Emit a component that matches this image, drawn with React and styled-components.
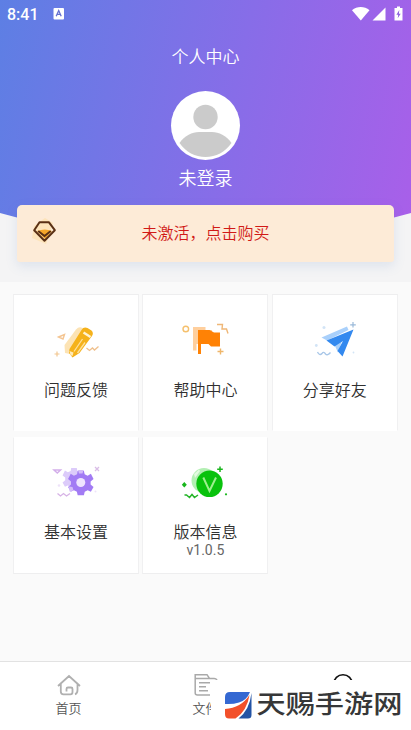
import React from "react";
import styled, { createGlobalStyle } from "styled-components";

const GlobalStyle = createGlobalStyle`
  * {
    box-sizing: border-box;
  }

  body {
    margin: 0;
    font-family: Roboto, "Noto Sans CJK SC", sans-serif;
    background-color: #fafafa;
  }

  svg {
    display: block;
  }
`

const Page = styled.div`
  position: relative;
  width: 411px;
  height: 730px;
  display: flex;
  flex-direction: column;
  overflow: hidden;
  background-color: #fafafa;
`

const Top = styled.div`
  height: 282px;
  flex: none;
  background-color: #f4f4f5;
`

const Header = styled.div`
  height: 240px;
  display: flex;
  flex-direction: column;
  align-items: center;
  color: #ffffff;
  background: linear-gradient(102deg, #5d7fe4 0%, #876de8 55%, #a95fe9 100%);
  clip-path: ellipse(445px 240px at 50% 0);
`

const StatusBar = styled.div`
  width: 100%;
  height: 28px;
  display: flex;
  align-items: center;
  padding: 0 7px;

  .time {
    font-size: 16px;
    font-weight: 500;
    line-height: 28px;
    padding-top: 1px;
    margin-right: 14px;
  }

  .icons {
    margin-left: auto;
    margin-right: -2px;
  }
`

const Title = styled.div`
  margin-top: 16px;
  font-size: 17px;
  font-weight: 350;
  line-height: 26px;
`

const Avatar = styled.div`
  width: 69px;
  height: 69px;
  margin-top: 21px;
  border-radius: 50%;
  overflow: hidden;
  background-color: #ffffff;
`

const UserName = styled.div`
  margin-top: 5px;
  font-size: 18px;
  font-weight: 350;
  line-height: 28px;
`

const Banner = styled.div`
  position: relative;
  height: 57px;
  margin: -35px 17px 0;
  display: grid;
  grid-template-columns: 56px 1fr 56px;
  align-items: center;
  border-radius: 5px 5px 3px 3px;
  background-color: #fdebd7;
  box-shadow: 0 4px 12px rgba(90, 130, 190, 0.15);

  .gem {
    margin: -5px 0 0 11px;
  }

  .text {
    color: #d11a16;
    font-size: 16px;
    font-weight: 350;
    line-height: 24px;
    text-align: center;
  }
`

const Grid = styled.div`
  display: grid;
  grid-template-columns: 126px 126px 126px;
  grid-auto-rows: 137px;
  column-gap: 3.4px;
  row-gap: 6px;
  padding: 12px 13px 0;
`

const Cell = styled.div`
  display: flex;
  flex-direction: column;
  align-items: center;
  padding-top: ${(props) => (props.$last ? "22px" : "24px")};
  background-color: #ffffff;
  border: 1px solid #f0f0f1;
  border-top-color: ${(props) => (props.$last ? "#ffffff" : "#eeeeef")};
  border-bottom-color: ${(props) => (props.$last ? "#eeeeef" : "#ffffff")};

  .label {
    margin-top: ${(props) => (props.$last ? "11px" : "10px")};
    font-size: 16px;
    font-weight: 350;
    line-height: 24px;
    color: #303030;
  }

  .note {
    margin-top: -4px;
    font-size: 14px;
    line-height: 18px;
    color: #666666;
  }
`

const TabBar = styled.div`
  height: 69px;
  margin-top: auto;
  display: grid;
  grid-template-columns: repeat(3, 1fr);
  background-color: #ffffff;
  border-top: 1px solid #e2e2e2;
`

const Tab = styled.div`
  display: flex;
  flex-direction: column;
  align-items: center;
  padding-top: 11px;
  color: #555555;
  font-size: 13px;
  font-weight: 350;
  line-height: 20px;

  svg {
    margin-bottom: 2px;
  }
`

const SiteMark = styled.div`
  position: absolute;
  right: 0;
  bottom: 0;
  width: 200px;
  height: 50px;
  display: flex;
  align-items: center;
  gap: 5px;
  padding: 0 0 0 13.5px;
  background-color: #ffffff;

  .name {
    font-family: "Noto Sans CJK SC", sans-serif;
    font-size: 29.2px;
    font-weight: 500;
    line-height: 40px;
    color: #363738;
    white-space: nowrap;
    transform: translateY(-3px) scaleY(0.87);
  }
`

const KeyboardIcon = () => (
  <svg width="12" height="12" viewBox="0 0 12 12">
    <rect x="0.5" y="0" width="10.5" height="11.5" rx="1" fill="#fff" />
    <path d="M3.2 8.2 5.7 2.5 8.2 8.2M4.1 6.3h3.2" fill="none" stroke="#646fd0" strokeWidth="1.3" />
  </svg>
)

const SignalIcons = () => (
  <svg className="icons" width="54" height="16" viewBox="0 0 54 16" fill="#fff">
    <path d="M0 4.2C5 0 12.500 0 17.500 4.200L8.800 14.500Z" />
    <path d="M20.500 14.500 33.500 1.500V14.500Z" />
    <path d="M45 0.500H48V2H50.500V14.500H42.500V2H45Z" />
    <path d="M47.300 4 44.400 8.700H46.200L45.700 12.300 48.700 7.700H46.900Z" fill="#8f62df" />
  </svg>
)

const GemIcon = () => (
  <svg className="gem" width="34" height="34" viewBox="0 0 34 34">
    <path d="M6 12 17 4 25 9 18 30 4 24Z" fill="#fde0a8" opacity="0.6" />
    <path d="M9 17Q17 14 24 17L17 25Z" fill="#f6a62a" />
    <path d="M11.500 8.300H21L26.800 16.200 16.500 26.800 6.200 16.200Z" fill="none" stroke="#5a3015" strokeWidth="2" strokeLinejoin="round" />
    <path d="M10.800 17.500 16.500 22 22.200 17.500" fill="none" stroke="#5a3015" strokeWidth="2" strokeLinecap="round" />
  </svg>
)

const PencilIcon = () => (
  <svg width="56" height="50" viewBox="0 0 56 50">
    <path d="M28 10.500Q31 7 34.500 9L37 13 22 35 17 34 16.500 26Z" fill="#fce3b4" />
    <path d="M33.500 11Q35.500 7.500 39.500 9L43.500 11.500Q46 14 44 17L31.500 34 24.500 38.500 21 34 21.500 30Z" fill="#f5b21b" />
    <path d="M35.500 13.500 42.500 18" fill="none" stroke="#fff3d2" strokeWidth="2.400" />
    <path d="M26 32.500 34.500 20M29.500 34 37 23.500" fill="none" stroke="#ffe09a" strokeWidth="1.300" />
    <path d="M21.500 32 25.500 33.500 24.500 37 22.500 36Z" fill="#ffeab9" />
    <path d="M10.500 18 16.500 15.500 15 20Z" fill="none" stroke="#f4c592" strokeWidth="1.400" />
    <path d="M9 32.500V37.500M6.500 35H11.500" stroke="#f2c68f" strokeWidth="1.200" />
    <path d="M38.500 29 41.500 31.500 44.500 29 46.500 31 50.500 27.500" fill="none" stroke="#efc08d" strokeWidth="1.300" />
  </svg>
)

const FlagIcon = () => (
  <svg width="56" height="50" viewBox="0 0 56 50">
    <path d="M16 8H28.500V11H35V25H19.500V31.500H16Z" fill="#ffcf9d" />
    <path d="M21 11H32.500L37 13.500H43V27.500H34L31.500 25H24V35H21Z" fill="#ff8205" />
    <circle cx="8.800" cy="10" r="2.800" fill="none" stroke="#f5c06d" strokeWidth="1.400" />
    <path d="M40 5.500H45.500L45 10H49.500L51 14.500" fill="none" stroke="#efb777" strokeWidth="1.400" />
    <path d="M43.500 29.500V35.500M40.500 32.500H46.500" stroke="#efb66a" strokeWidth="1.400" />
  </svg>
)

const PlaneIcon = () => (
  <svg width="56" height="50" viewBox="0 0 56 50">
    <path d="M14.500 18.500 40 7.500 41.500 11 20 21.500Z" fill="#a9d0fb" />
    <path d="M27 25 35.500 20 31 33.500Z" fill="#a9d0fb" />
    <path d="M19.500 21.500 46.500 10.500 35.500 37.500 30.500 32 36 22 27.500 27.500Z" fill="#3389ef" />
    <path d="M46 3V8.500M43.200 5.800H48.800" stroke="#9ab9d9" strokeWidth="1.200" />
    <path d="M10.500 33Q12.500 37 15 34.500Q16.500 32 18.500 35Q20.500 37 23.500 33.500" fill="none" stroke="#a9c7e8" strokeWidth="1.400" />
    <circle cx="17" cy="8.500" r="1.500" fill="#d2e4f6" />
    <circle cx="9.300" cy="26.500" r="1.400" fill="#d2e4f6" />
    <circle cx="46.500" cy="33.500" r="0.900" fill="#d2e4f6" />
  </svg>
)

const gear = "M-3.200-12H3.200L3.800-8.500 7-7 10.300-9 13-3.500 10-1V2L13 4.500 10.300 9.500 7 8 4 9.500 3.200 13H-3.200L-4 9.500-7 8-10.300 9.500-13 4.500-10 2V-1L-13-3.500-10.300-9-7-7-3.800-8.500Z"

const GearIcon = () => (
  <svg width="56" height="50" viewBox="0 0 56 50">
    <path d={gear} transform="translate(26 18.500) scale(0.88)" fill="#dccbfa" />
    <path d={gear} transform="translate(32.800 22.500) scale(0.98)" fill="#a27bf4" />
    <circle cx="32.800" cy="22.500" r="4.500" fill="#efe5ff" />
    <path d="M30 10H35.500L34.500 13.500H31ZM21 26.500 24.500 27 25.500 30.500 21.500 31.500Z" fill="#d4bcf9" />
    <path d="M6 10H12.500L9.300 13Z" fill="none" stroke="#d3aeea" strokeWidth="1.500" />
    <path d="M47 7 51 11M51 7 47 11" stroke="#d9bde6" strokeWidth="1.300" />
    <path d="M9.500 33.500 12.500 36 15.500 33.500 18.500 36 22 33.500" fill="none" stroke="#d7b3e6" strokeWidth="1.300" />
    <circle cx="11" cy="25.500" r="1.300" fill="#eee2f9" />
    <circle cx="47.500" cy="31.500" r="1" fill="#eee2f9" />
  </svg>
)

const VersionIcon = () => (
  <svg width="56" height="50" viewBox="0 0 56 50">
    <circle cx="27" cy="20.500" r="12.500" fill="#b3efb3" />
    <path d="M17 14 22 9.500 23 11 18 18Z" fill="#e3fae0" />
    <circle cx="32.500" cy="23.800" r="13.200" fill="#09c20d" />
    <path d="M26.300 17.500 32.500 31 39 17.500" fill="none" stroke="#9df08e" strokeWidth="2" />
    <path d="M43 6.500V12M40.200 9.300H45.800" stroke="#18b61c" strokeWidth="1.500" />
    <path d="M7.300 22 9.800 24.800 7.300 27.600 4.800 24.800Z" fill="#18b61c" />
    <path d="M7.500 35H9.500L12.500 37.500 15 34.500 17.500 37.500 21 35" fill="none" stroke="#22b425" strokeWidth="1.500" />
    <circle cx="49" cy="34.300" r="1.100" fill="#18b61c" />
  </svg>
)

const HomeIcon = () => (
  <svg width="26" height="24" viewBox="0 0 26 24" fill="none" stroke="#b0b0b0" strokeWidth="1.800">
    <path d="M2 13 13 3 24 13M4.800 10.500V18.500Q4.800 21.300 7.500 21.300H14.500Q16.500 21.300 16.500 19V16Q16.500 14.500 15 14.500H12Q10.500 14.500 10.500 16V18.500M21.500 11V17Q21.500 20.500 19 21.300" />
  </svg>
)

const FileIcon = () => (
  <svg width="26" height="24" viewBox="0 0 26 24" fill="none" stroke="#a9a9a9" strokeWidth="1.500">
    <path d="M17 22H4.500Q2.200 22 2.200 20V1.700H14L16.500 5.500H21Q23.500 5.500 24 7.500M2.200 5.500H16.500M6 9.800H17M6 13.800H13M6 17.800H15" />
  </svg>
)

const ProfileIcon = () => (
  <svg width="26" height="24" viewBox="0 0 26 24" fill="none" stroke="#111111" strokeWidth="1.600">
    <circle cx="13" cy="11" r="9.300" />
  </svg>
)

const LogoMark = () => (
  <svg width="27" height="27" viewBox="0 0 27 27">
    <path d="M5 0H26.500V23Q26.500 26.500 23 26.500H0V5Q0 0 5 0Z" fill="#fff" />
    <path d="M5 0H25Q22 8 14 10.500 8 12.500 0 12V5Q0 0 5 0Z" fill="#3468d2" />
    <path d="M0 17Q16 16 24.500 3 22 19 10.500 26.500H4Q0 26.500 0 22Z" fill="#f2502a" />
    <path d="M26.500 1V23Q26.500 26.500 23 26.500H13.500Q24.500 18 26.500 1Z" fill="#2454a5" />
  </svg>
)

const items = [
  { label: "问题反馈", Icon: PencilIcon },
  { label: "帮助中心", Icon: FlagIcon },
  { label: "分享好友", Icon: PlaneIcon },
  { label: "基本设置", Icon: GearIcon, last: true },
  { label: "版本信息", Icon: VersionIcon, note: "v1.0.5", last: true }
]

const App = () => (
  <Page>
    <GlobalStyle />
    <Top>
      <Header>
        <StatusBar>
          <span className="time">8:41</span>
          <KeyboardIcon />
          <SignalIcons />
        </StatusBar>
        <Title>个人中心</Title>
        <Avatar>
          <svg width="69" height="69" viewBox="0 0 69 69" fill="#cbcbcb">
            <circle cx="34.500" cy="26" r="12.200" />
            <path d="M8.500 52C14 44.500 21 41 28 41H41C48 41 55 44.500 60.500 52C54 61 45 66 34.500 66S15 61 8.500 52Z" />
          </svg>
        </Avatar>
        <UserName>未登录</UserName>
      </Header>
      <Banner>
        <GemIcon />
        <span className="text">未激活，点击购买</span>
      </Banner>
    </Top>
    <Grid>
      {items.map(({ label, Icon, note, last }) => (
        <Cell key={label} $last={last}>
          <Icon />
          <div className="label">{label}</div>
          {note && <div className="note">{note}</div>}
        </Cell>
      ))}
    </Grid>
    <TabBar>
      <Tab>
        <HomeIcon />
        首页
      </Tab>
      <Tab>
        <FileIcon />
        文件
      </Tab>
      <Tab>
        <ProfileIcon />
      </Tab>
    </TabBar>
    <SiteMark>
      <LogoMark />
      <span className="name">天赐手游网</span>
    </SiteMark>
  </Page>
)

export default App
